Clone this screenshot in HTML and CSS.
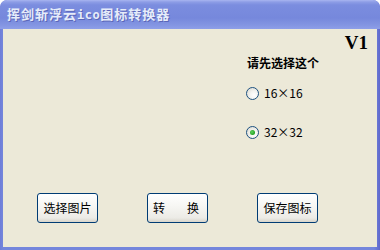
FILE: index.html
```html
<!DOCTYPE html>
<html lang="zh-CN">
<head>
<meta charset="utf-8">
<title>挥剑斩浮云ico图标转换器</title>
<link rel="stylesheet" href="styles.css">
</head>
<body>
<div class="window">
  <div class="titlebar"><span class="title">挥剑斩浮云<span class="latin">ico</span>图标转换器</span></div>
  <div class="client">
    <div class="version">V1</div>
    <div class="options">
      <div class="heading">请先选择这个</div>
      <label class="radio first"><span class="dot"></span><span class="label">16×16</span></label>
      <label class="radio checked"><span class="dot"></span><span class="label">32×32</span></label>
    </div>
    <div class="buttons">
      <div class="btn">选择图片</div>
      <div class="btn spread"><span>转</span><span>换</span></div>
      <div class="btn">保存图标</div>
    </div>
  </div>
</div>
</body>
</html>
```
FILE: styles.css
```css
html, body {
  margin: 0;
  padding: 0;
  background: #ffffff;
}
body {
  font-family: "Noto Sans CJK SC", "Liberation Sans", sans-serif;
}
.window {
  width: 380px;
  height: 250px;
  display: flex;
  flex-direction: column;
  background: linear-gradient(to right, #6f7ed8 0, #7486dc 3px, #7486dc 374px, #5f68cc 380px);
  border-radius: 7px 7px 0 0;
  overflow: hidden;
}
.titlebar {
  height: 29px;
  flex: none;
  display: flex;
  align-items: center;
  padding-left: 7px;
  background: linear-gradient(to bottom, #a8b5f0 0, #8d9de6 2px, #7b8ddf 5px, #7688dc 18px, #8395e2 25px, #8e9fe8 29px);
  border-radius: 7px 7px 0 0;
}
.title {
  font-size: 13px;
  font-weight: bold;
  color: #e6ecfa;
  letter-spacing: 1px;
  text-shadow: 1px 1px 0 #5a66b8;
  line-height: 16px;
}
.latin {
  font-family: "DejaVu Sans Mono", monospace;
  font-size: 12px;
  letter-spacing: 0.5px;
}
.client {
  flex: 1;
  margin: 0 3px 3px 3px;
  background: #ece9d8;
  display: flex;
  flex-direction: column;
}
.version {
  align-self: flex-end;
  margin: 5px 9px 0 0;
  font-family: "Liberation Serif", serif;
  font-weight: bold;
  font-size: 19px;
  line-height: 18px;
  color: #000;
}
.options {
  margin-left: 243px;
  margin-top: 3px;
  display: flex;
  flex-direction: column;
}
.heading {
  font-size: 12px;
  font-weight: bold;
  line-height: 16px;
  margin-left: 1px;
  color: #000;
}
.radio {
  display: flex;
  align-items: center;
  height: 14px;
  gap: 5px;
}
.radio.first {
  margin-top: 15px;
}
.radio.checked {
  margin-top: 25px;
}
.dot {
  width: 11px;
  height: 11px;
  border: 1px solid #1c5180;
  border-radius: 50%;
  background: radial-gradient(circle at 65% 65%, #ffffff 0, #f4f4f0 40%, #d6d5cc 100%);
  display: flex;
  align-items: center;
  justify-content: center;
}
.checked .dot::after {
  content: "";
  width: 5px;
  height: 5px;
  border-radius: 50%;
  background: radial-gradient(circle at 40% 40%, #5fd15f 0, #21a121 70%);
}
.label {
  font-size: 12px;
  line-height: 14px;
  color: #000;
}
.buttons {
  margin-top: auto;
  margin-bottom: 24px;
  margin-left: 34px;
  display: flex;
  gap: 49px;
}
.btn {
  width: 59px;
  height: 28px;
  border: 1px solid #003c74;
  border-radius: 3px;
  background: linear-gradient(to bottom, #ffffff 0, #f7f7f4 40%, #ecebe6 85%, #d8d5cb 100%);
  display: flex;
  align-items: center;
  justify-content: center;
  font-size: 12px;
  color: #000;
  line-height: 14px;
}
.btn.spread {
  justify-content: space-between;
  padding: 0 8px 0 5px;
  width: 46px;
}
```
